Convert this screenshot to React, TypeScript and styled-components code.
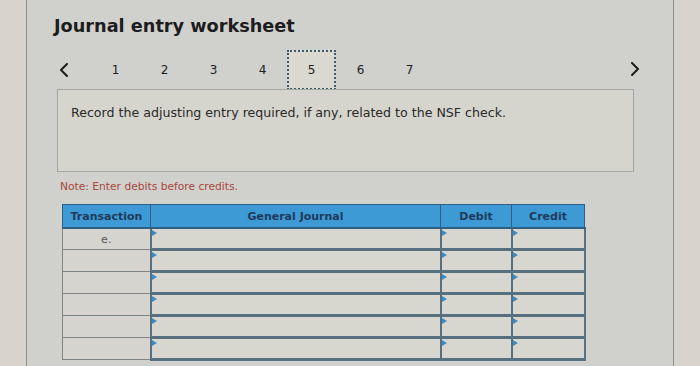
import styled, { createGlobalStyle } from "styled-components";

const GlobalStyle = createGlobalStyle`
  html, body {
    margin: 0;
    padding: 0;
    background: #d9d5cc;
  }
  body {
    font-family: "DejaVu Sans", Verdana, sans-serif;
  }
`;

const steps = [1, 2, 3, 4, 5, 6, 7];
const current = 5;
const rows = ["e.", "", "", "", "", ""];

function Chevron({ dir }: { dir: "left" | "right" }) {
  const pts = dir === "left" ? "7,1 1,7 7,13" : "1,1 7,7 1,13";
  return (
    <svg width="9" height="14" viewBox="0 0 9 14">
      <polyline
        points={pts}
        fill="none"
        stroke="#1c1c1c"
        strokeWidth="2"
        strokeLinecap="round"
        strokeLinejoin="round"
      />
    </svg>
  );
}

export default function App() {
  return (
    <>
      <GlobalStyle />
      <Screen>
        <SideStrip />
        <Panel>
          <Title>Journal entry worksheet</Title>
          <NavRow>
            <Arrow>
              <Chevron dir="left" />
            </Arrow>
            <Steps>
              {steps.map((s) => (
                <Step key={s} $active={s === current}>
                  {s}
                </Step>
              ))}
            </Steps>
            <Arrow $right>
              <Chevron dir="right" />
            </Arrow>
          </NavRow>
          <Instruction>
            Record the adjusting entry required, if any, related to the NSF check.
          </Instruction>
          <Note>Note: Enter debits before credits.</Note>
          <Table>
            <colgroup>
              <col style={{ width: 88 }} />
              <col style={{ width: 290 }} />
              <col style={{ width: 71 }} />
              <col style={{ width: 73 }} />
            </colgroup>
            <thead>
              <tr>
                <Th>Transaction</Th>
                <Th>General Journal</Th>
                <Th>Debit</Th>
                <Th>Credit</Th>
              </tr>
            </thead>
            <tbody>
              {rows.map((r, i) => (
                <tr key={i}>
                  <TxCell>{r}</TxCell>
                  <InputCell>
                    <Flag />
                  </InputCell>
                  <InputCell>
                    <Flag />
                  </InputCell>
                  <InputCell>
                    <Flag />
                  </InputCell>
                </tr>
              ))}
            </tbody>
          </Table>
        </Panel>
        <SideStrip />
      </Screen>
    </>
  );
}

const Screen = styled.div`
  display: flex;
  width: 700px;
  height: 366px;
  overflow: hidden;
`;

const SideStrip = styled.div`
  flex: 1;
  background: #d8d4cb;
`;

const Panel = styled.div`
  width: 648px;
  flex: none;
  background: #d0d1cc;
  border-left: 1px solid #8f8f8a;
  border-right: 1px solid #8f8f8a;
  padding: 15px 0 0 27px;
  box-sizing: border-box;
  display: flex;
  flex-direction: column;
`;

const Title = styled.h1`
  margin: 0;
  font-size: 17.7px;
  line-height: 22px;
  font-weight: bold;
  color: #1d1d1f;
`;

const NavRow = styled.div`
  display: flex;
  align-items: center;
  height: 40px;
  margin-top: 13px;
`;

const Arrow = styled.span<{ $right?: boolean }>`
  display: flex;
  width: 9px;
  margin-left: ${(p) => (p.$right ? "auto" : "6px")};
  margin-right: ${(p) => (p.$right ? "33px" : "0")};
  margin-top: ${(p) => (p.$right ? "-3px" : "0")};
`;

const Steps = styled.div`
  display: flex;
  margin-left: 22px;
`;

const Step = styled.div<{ $active?: boolean }>`
  width: 49px;
  height: 40px;
  box-sizing: border-box;
  display: flex;
  align-items: center;
  justify-content: center;
  font-size: 12px;
  color: #222;
  border: 2px dotted ${(p) => (p.$active ? "#3e5a70" : "transparent")};
  background: ${(p) => (p.$active ? "#d9d9cf" : "transparent")};
`;

const Instruction = styled.div`
  margin: -1px 0 0 3px;
  width: 577px;
  height: 83px;
  box-sizing: border-box;
  border: 1px solid #a5a6a0;
  background: #d6d5cd;
  padding: 15px 0 0 13px;
  font-size: 12.6px;
  color: #2a2a2a;
`;

const Note = styled.div`
  margin: 8px 0 0 6px;
  font-size: 10.7px;
  color: #a8473f;
`;

const Table = styled.table`
  margin: 11px 0 0 8px;
  width: 522px;
  border-collapse: collapse;
  table-layout: fixed;
`;

const Th = styled.th`
  height: 22px;
  padding: 0;
  background: #3d9ad4;
  color: #1f3a5c;
  font-size: 11px;
  font-weight: bold;
  border: 1px solid #2f5f82;
  border-bottom: 2px solid #2f5f82;
`;

const TxCell = styled.td`
  height: 19px;
  padding: 0;
  text-align: center;
  font-size: 11px;
  color: #555;
  background: #d5d4ce;
  border: 1px solid #7f8587;
`;

const InputCell = styled.td`
  position: relative;
  height: 19px;
  padding: 0;
  background: #d7d6cf;
  border-left: 2px solid #56707f;
  border-right: 2px solid #56707f;
  border-bottom: 3px solid #56707f;
`;

const Flag = styled.span`
  position: absolute;
  top: 1px;
  left: 0;
  width: 0;
  height: 0;
  border-top: 3px solid transparent;
  border-bottom: 3px solid transparent;
  border-left: 5px solid #3a8cc8;
`;
